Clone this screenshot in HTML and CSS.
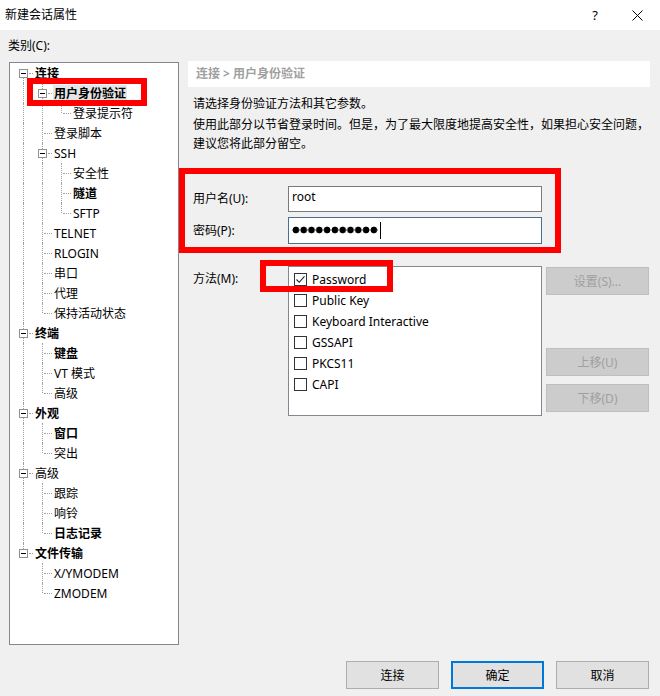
FILE: index.html
```html
<!DOCTYPE html>
<html lang="zh-CN">
<head>
<meta charset="utf-8">
<title>新建会话属性</title>
<link rel="stylesheet" href="styles.css">
</head>
<body>
<div class="window">
  <div class="titlebar">
    <span class="title">新建会话属性</span>
    <span class="help">?</span>
    <span class="close"><svg width="11" height="11" viewBox="0 0 11 11"><path d="M0.5 0.5L10.5 10.5M10.5 0.5L0.5 10.5" stroke="#000" stroke-width="1" fill="none"/></svg></span>
  </div>
  <div class="content">
    <div class="cat-label">类别(C):</div>
    <div class="main">
      <div class="tree">
        <div class="row"><i class="g x d"><b class="bx"></b></i><span class="lbl b">连接</span></div>
        <div class="row"><i class="g v"></i><i class="g x f"><b class="bx"></b></i><span class="lbl b sel">用户身份验证</span></div>
        <div class="row"><i class="g v"></i><i class="g v"></i><i class="g l"></i><span class="lbl">登录提示符</span></div>
        <div class="row"><i class="g v"></i><i class="g t"></i><span class="lbl">登录脚本</span></div>
        <div class="row"><i class="g v"></i><i class="g x f"><b class="bx"></b></i><span class="lbl">SSH</span></div>
        <div class="row"><i class="g v"></i><i class="g v"></i><i class="g t"></i><span class="lbl">安全性</span></div>
        <div class="row"><i class="g v"></i><i class="g v"></i><i class="g t"></i><span class="lbl b">隧道</span></div>
        <div class="row"><i class="g v"></i><i class="g v"></i><i class="g l"></i><span class="lbl">SFTP</span></div>
        <div class="row"><i class="g v"></i><i class="g t"></i><span class="lbl">TELNET</span></div>
        <div class="row"><i class="g v"></i><i class="g t"></i><span class="lbl">RLOGIN</span></div>
        <div class="row"><i class="g v"></i><i class="g t"></i><span class="lbl">串口</span></div>
        <div class="row"><i class="g v"></i><i class="g t"></i><span class="lbl">代理</span></div>
        <div class="row"><i class="g v"></i><i class="g l"></i><span class="lbl">保持活动状态</span></div>
        <div class="row"><i class="g x f"><b class="bx"></b></i><span class="lbl b">终端</span></div>
        <div class="row"><i class="g v"></i><i class="g t"></i><span class="lbl b">键盘</span></div>
        <div class="row"><i class="g v"></i><i class="g t"></i><span class="lbl">VT 模式</span></div>
        <div class="row"><i class="g v"></i><i class="g l"></i><span class="lbl">高级</span></div>
        <div class="row"><i class="g x f"><b class="bx"></b></i><span class="lbl b">外观</span></div>
        <div class="row"><i class="g v"></i><i class="g t"></i><span class="lbl b">窗口</span></div>
        <div class="row"><i class="g v"></i><i class="g l"></i><span class="lbl">突出</span></div>
        <div class="row"><i class="g x f"><b class="bx"></b></i><span class="lbl">高级</span></div>
        <div class="row"><i class="g v"></i><i class="g t"></i><span class="lbl">跟踪</span></div>
        <div class="row"><i class="g v"></i><i class="g t"></i><span class="lbl">响铃</span></div>
        <div class="row"><i class="g v"></i><i class="g l"></i><span class="lbl b">日志记录</span></div>
        <div class="row"><i class="g x u"><b class="bx"></b></i><span class="lbl b">文件传输</span></div>
        <div class="row"><i class="g"></i><i class="g t"></i><span class="lbl">X/YMODEM</span></div>
        <div class="row"><i class="g"></i><i class="g l"></i><span class="lbl">ZMODEM</span></div>
      </div>
      <div class="panel">
        <div class="crumb">连接 &gt; 用户身份验证</div>
        <p class="desc">请选择身份验证方法和其它参数。</p>
        <p class="desc2">使用此部分以节省登录时间。但是，为了最大限度地提高安全性，如果担心安全问题，<br>建议您将此部分留空。</p>
        <div class="frow first">
          <span class="flabel">用户名(U):</span>
          <div class="input">root</div>
        </div>
        <div class="frow">
          <span class="flabel">密码(P):</span>
          <div class="input focus"><span class="dots" aria-label="●●●●●●●●●●●"></span><span class="caret"></span></div>
        </div>
        <div class="mrow">
          <span class="flabel mlabel">方法(M):</span>
          <div class="listbox">
            <div class="item"><span class="cb"><svg width="11" height="11" viewBox="0 0 11 11"><path d="M1.5 5.5L4.2 8.3L9.5 2.3" stroke="#222" stroke-width="1.1" fill="none"/></svg></span>Password</div>
            <div class="item"><span class="cb"></span>Public Key</div>
            <div class="item"><span class="cb"></span>Keyboard Interactive</div>
            <div class="item"><span class="cb"></span>GSSAPI</div>
            <div class="item"><span class="cb"></span>PKCS11</div>
            <div class="item"><span class="cb"></span>CAPI</div>
          </div>
          <div class="sidebtns">
            <div class="dbtn set">设置(S)...</div>
            <div class="dbtn up">上移(U)</div>
            <div class="dbtn down">下移(D)</div>
          </div>
        </div>
      </div>
    </div>
    <div class="footer">
      <div class="btn">连接</div>
      <div class="btn default">确定</div>
      <div class="btn">取消</div>
    </div>
  </div>
  <div class="mark m1"></div>
  <div class="mark m2"></div>
  <div class="mark m3"></div>
</div>
</body>
</html>
```
FILE: styles.css
```css
html, body {
  margin: 0;
  padding: 0;
}
body {
  background: #f0f0f0;
  font-family: "Noto Sans", "Noto Sans CJK SC", sans-serif;
  font-size: 12px;
  color: #000;
}
.window {
  width: 660px;
  height: 696px;
  position: relative;
  overflow: hidden;
  background: #f0f0f0;
}
.titlebar {
  height: 30px;
  background: #fff;
  display: flex;
  align-items: center;
}
.title {
  flex: 1;
  padding-left: 5px;
  line-height: 18px;
}
.help {
  width: 14px;
  text-align: center;
  margin-right: 30px;
  font-size: 13px;
}
.close {
  display: flex;
  margin-right: 17px;
}
.content {
  padding-left: 9px;
}
.cat-label {
  margin-top: 7px;
  margin-left: -1px;
  line-height: 18px;
  height: 18px;
}
.main {
  display: flex;
  margin-top: 6px;
  height: 584px;
}
.tree {
  width: 170px;
  height: 583px;
  margin-top: 1px;
  box-sizing: border-box;
  border: 1px solid #828790;
  background: #fff;
  padding-left: 4px;
}
.row {
  display: flex;
  align-items: center;
  height: 20px;
}
.g {
  display: flex;
  justify-content: center;
  align-items: flex-start;
  position: relative;
  width: 19px;
  height: 20px;
  flex: none;
}
.v::before, .t::before, .l::before, .x::before {
  content: "";
  position: absolute;
  left: 9px;
  top: 0;
  height: 20px;
  border-left: 1px dotted #a0a0a0;
}
.l::before { height: 10px; }
.x.d::before { top: 10px; height: 10px; }
.x.u::before { height: 10px; }
.t::after, .l::after {
  content: "";
  position: absolute;
  left: 11px;
  width: 8px;
  top: 10px;
  border-top: 1px dotted #a0a0a0;
}
.x::after {
  content: "";
  position: absolute;
  left: 15px;
  width: 4px;
  top: 10px;
  border-top: 1px dotted #a0a0a0;
}
.bx {
  position: relative;
  z-index: 1;
  margin-top: 6px;
  width: 9px;
  height: 9px;
  box-sizing: border-box;
  border: 1px solid #919191;
  background: #fff;
}
.bx::after {
  content: "";
  position: absolute;
  left: 1px;
  top: 3px;
  width: 5px;
  height: 1px;
  background: #000;
}
.lbl {
  margin-left: 1px;
  padding: 0 1px;
  line-height: 17px;
  white-space: nowrap;
  color: #000;
}
.b { font-weight: bold; }
.sel { background: #e5e5e5; }

.panel {
  margin-left: 9px;
  width: 462px;
}
.crumb {
  height: 26px;
  line-height: 26px;
  background: #fff;
  color: #a0a0a0;
  font-weight: bold;
  padding-left: 8px;
}
.desc {
  margin: 7px 0 0 5px;
  line-height: 19px;
}
.desc2 {
  margin: 2px 0 0 5px;
  line-height: 19px;
}
.frow {
  display: flex;
  align-items: center;
  margin-left: 5px;
  margin-top: 5px;
}
.frow.first { margin-top: 33px; }
.flabel {
  width: 95px;
  flex: none;
  line-height: 18px;
}
.input {
  width: 254px;
  height: 26px;
  box-sizing: border-box;
  border: 1px solid #7a7a7a;
  background: #fff;
  padding-left: 3px;
  display: flex;
  align-items: center;
  line-height: 18px;
  padding-bottom: 4px;
}
.input.focus {
  height: 27px;
  border-color: #4a6f94;
  padding-bottom: 1px;
}
.dots {
  display: block;
  width: 86px;
  height: 8px;
  background: radial-gradient(circle at 3.9px 4px, #000 3.1px, transparent 3.7px) 0 0 / 7.8px 8px repeat-x;
}
.caret {
  display: block;
  width: 1px;
  height: 17px;
  background: #000;
  margin-left: 2px;
}
.mrow {
  display: flex;
  align-items: flex-start;
  margin-left: 5px;
  margin-top: 22px;
}
.mlabel { padding-top: 4px; }
.listbox {
  width: 254px;
  height: 150px;
  box-sizing: border-box;
  border: 1px solid #828790;
  background: #fff;
  padding: 2px 0 0 5px;
}
.item {
  display: flex;
  align-items: center;
  height: 21px;
  line-height: 18px;
  white-space: nowrap;
}
.cb {
  width: 13px;
  height: 13px;
  box-sizing: border-box;
  border: 1px solid #333;
  margin-right: 5px;
  display: flex;
  align-items: center;
  justify-content: center;
  flex: none;
}
.sidebtns {
  display: flex;
  flex-direction: column;
  margin-left: 4px;
  width: 103px;
}
.dbtn {
  height: 28px;
  box-sizing: border-box;
  border: 1px solid #bfbfbf;
  background: #cccccc;
  color: #a0a0a0;
  display: flex;
  align-items: center;
  justify-content: center;
}
.dbtn.set { margin-top: 1px; }
.dbtn.up { margin-top: 53px; }
.dbtn.down { margin-top: 8px; }
.footer {
  display: flex;
  justify-content: flex-end;
  gap: 12px;
  padding-right: 11px;
  margin-top: 16px;
}
.btn {
  width: 93px;
  height: 28px;
  box-sizing: border-box;
  border: 1px solid #adadad;
  background: #e1e1e1;
  display: flex;
  align-items: center;
  justify-content: center;
}
.btn.default {
  border: 2px solid #0078d7;
}
.mark {
  position: absolute;
  box-sizing: border-box;
  border: 6px solid #ff0000;
}
.m1 { left: 27px; top: 78px; width: 120px; height: 28px; }
.m2 { left: 179px; top: 168px; width: 382px; height: 85px; }
.m3 { left: 260px; top: 260px; width: 133px; height: 32px; }
```
